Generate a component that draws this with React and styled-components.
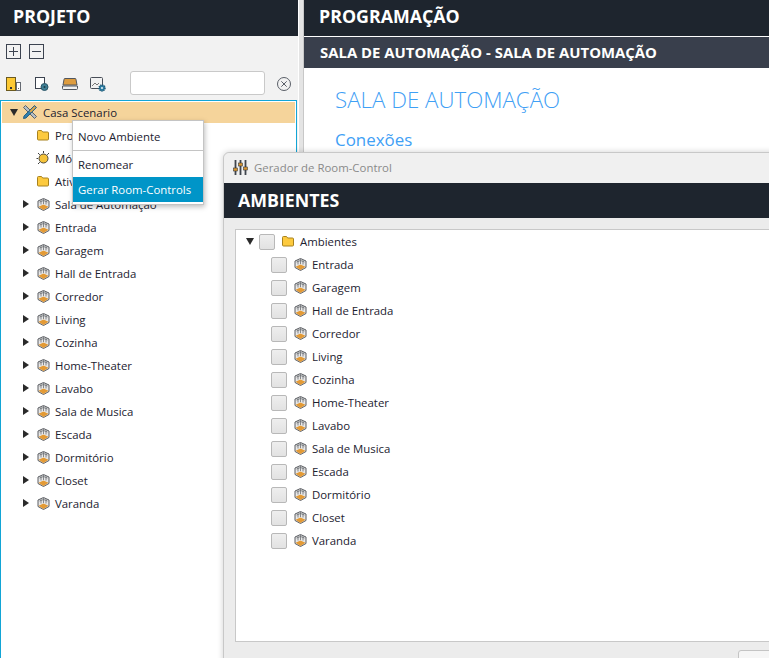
import React from 'react';
import styled, { createGlobalStyle } from 'styled-components';

const GlobalStyle = createGlobalStyle`
  html, body {
    margin: 0;
    padding: 0;
    background: #f2f2f2;
  }
  * {
    box-sizing: border-box;
  }
`;

const Page = styled.div`
  position: relative;
  display: grid;
  grid-template-columns: 298px 6px 1fr;
  width: 769px;
  height: 658px;
  overflow: hidden;
  font-family: 'Open Sans', 'Noto Sans', sans-serif;
  color: #1c2230;
`;

const Column = styled.div`
  display: flex;
  flex-direction: column;
  min-width: 0;
  background: ${(p) => p.$bg || '#f2f2f2'};
`;

const Divider = styled.div`
  background: #e4e4e4;
  border-left: 1px solid #fff;
  border-right: 1px solid #c8c8c8;
`;

const PanelHeader = styled.div`
  display: flex;
  align-items: center;
  height: ${(p) => p.$height || 36}px;
  flex: none;
  padding-left: ${(p) => p.$pad || 13}px;
  padding-bottom: ${(p) => p.$lift ?? 5}px;
  background: #1e252e;
  color: #fff;
  font-size: 17.8px;
  font-weight: 700;
`;

const SubHeader = styled.div`
  display: flex;
  align-items: center;
  height: 31px;
  margin-top: 1px;
  padding: 0 0 2px 16px;
  flex: none;
  background: #393f4c;
  color: #fff;
  font-size: 14.9px;
  font-weight: 700;
`;

const Content = styled.div`
  flex: 1;
  padding: 17px 31px;
  background: #fff;
  color: #3fa0f5;
`;

const Title = styled.div`
  font-size: 22.3px;
  line-height: 30px;
  font-weight: 300;
`;

const SectionLink = styled.div`
  margin-top: 13px;
  font-size: 16.9px;
  line-height: 24px;
`;

const ExpandRow = styled.div`
  display: flex;
  gap: 8px;
  height: 34px;
  padding: 8px 0 0 6px;
  flex: none;
`;

const SquareButton = styled.div`
  display: flex;
  align-items: center;
  justify-content: center;
  width: 15px;
  height: 15px;
  border: 1px solid #3c4350;
  color: #3c4350;
`;

const ToolRow = styled.div`
  display: flex;
  align-items: center;
  height: 30px;
  flex: none;
  padding: 0 0 2px 6px;
`;

const ToolSlot = styled.div`
  display: flex;
  width: 28px;
  flex: none;
`;

const SearchInput = styled.div`
  width: 135px;
  height: 24px;
  align-self: flex-start;
  margin: 1px 0 0 12px;
  border: 1px solid #c9c9c9;
  border-radius: 3px;
  background: #fff;
`;

const ClearButton = styled.div`
  display: flex;
  margin-left: 11px;
`;

const TreePanel = styled.div`
  flex: 1;
  margin-right: 1px;
  border: 1px solid #12a5d6;
  border-bottom: 0;
  padding: 1px;
  background: #fff;
`;

const Row = styled.div`
  display: flex;
  align-items: center;
  height: ${(p) => (p.$selected ? 21 : 23)}px;
  margin-bottom: ${(p) => (p.$selected ? 1 : 0)}px;
  padding-left: ${(p) => p.$indent}px;
  padding-bottom: 1px;
  background: ${(p) => (p.$selected ? '#f5d49b' : 'transparent')};
  font-size: 11.4px;
  white-space: nowrap;
`;

const Arrow = styled.span`
  width: 0;
  height: 0;
  flex: none;
  ${(p) =>
    p.$open
      ? `border-left: 4.5px solid transparent;
         border-right: 4.5px solid transparent;
         border-top: 7px solid #2a2a2a;
         margin-right: ${p.$gap}px;`
      : `border-top: 4.5px solid transparent;
         border-bottom: 4.5px solid transparent;
         border-left: 6px solid #2a2a2a;
         margin-right: ${p.$gap}px;`}
`;

const IconSlot = styled.span`
  display: flex;
  flex: none;
  margin-right: ${(p) => p.$gap}px;
`;

const Menu = styled.div`
  position: absolute;
  z-index: 3;
  left: 72px;
  top: 120px;
  width: 132px;
  padding: 1px 0 2px;
  border: 1px solid #c4c4c4;
  background: #fff;
  box-shadow: 1px 2px 5px rgba(0, 0, 0, 0.25);
  font-size: 11.4px;
`;

const MenuItem = styled.div`
  display: flex;
  align-items: center;
  height: ${(p) => p.$height}px;
  padding-left: 5px;
  background: ${(p) => (p.$active ? '#0095c8' : 'transparent')};
  color: ${(p) => (p.$active ? '#fff' : '#1c2230')};
  white-space: nowrap;
`;

const MenuRule = styled.div`
  height: 1px;
  background: #c4c4c4;
`;

const Dialog = styled.div`
  position: absolute;
  z-index: 2;
  left: 223px;
  top: 152px;
  width: 570px;
  height: 520px;
  display: flex;
  flex-direction: column;
  border: 1px solid #c8c8c8;
  border-radius: 6px 0 0 0;
  background: #ececec;
  box-shadow: 0 0 6px rgba(0, 0, 0, 0.18);
`;

const DialogTitle = styled.div`
  display: flex;
  align-items: center;
  gap: 6px;
  height: 30px;
  flex: none;
  padding: 0 0 1px 9px;
  border-radius: 6px 0 0 0;
  background: #f0f0f0;
  color: #8a8a8a;
  font-size: 11.4px;
`;

const DialogBody = styled.div`
  height: 413px;
  flex: none;
  margin: 11px 0 0 11px;
  border: 1px solid #c8c8c8;
  background: #fff;
`;

const DialogFooter = styled.div`
  height: 40px;
  flex: none;
  padding: 8px 0 0 514px;
`;

const FooterButton = styled.div`
  width: 60px;
  height: 30px;
  border: 1px solid #c4c4c4;
  border-radius: 3px;
  background: #f6f6f6;
`;

const Check = styled.span`
  width: 16px;
  height: 16px;
  flex: none;
  margin: 2px 7px 0 0;
  border: 1px solid #b8b8b8;
  border-radius: 2px;
  background: linear-gradient(#eeeeee, #e2e2e2);
`;

const FolderIcon = () => (
  <svg width="12" height="11" viewBox="0 0 12 11">
    <path d="M.5 1.500Q.5.5 1.500.5h3l1.200 1.500h4.800q1 0 1 1v6q0 1-1 1h-9q-1 0-1-1z" fill="#fdca3e" stroke="#a8821f" />
  </svg>
);

const RoomIcon = () => (
  <svg width="13" height="13" viewBox="0 0 13 13">
    <path d="M6.500.5L12 3v6.500l-5.500 3-5.500-3V3z" fill="#e8e8e8" stroke="#5a5d62" />
    <path d="M4 2.200v4.300M9 2.200v4.300M6.500 1v5M2.500 4L6.500 2.500 10.500 4" stroke="#6a6d72" strokeWidth=".8" fill="none" />
    <path d="M1.500 8.800l5-2.300 5 2.300-5 3.300z" fill="#e39a35" />
  </svg>
);

const ToolsIcon = () => (
  <svg width="14" height="14" viewBox="0 0 14 14">
    <path d="M2.500.5l11 11-2 2-11-11z" fill="#b4bec6" stroke="#3c4a58" strokeWidth=".8" />
    <path d="M11.500.5l2 2L3 13l-2.500.5L1 11z" fill="#2f7fae" stroke="#2a5f82" />
    <path d="M11.500 1.200l1.300 1.300-5 5-1.300-1.300z" fill="#e8a93f" />
  </svg>
);

const ModuleIcon = () => (
  <svg width="14" height="14" viewBox="0 0 14 14">
    <circle cx="7.500" cy="7.500" r="4.500" fill="#f5c33a" stroke="#4f4a3c" />
    <path d="M7.500 0v2M.5 7.500h1.500M2 2l1.800 1.800M13 2l-1.800 1.800M2 13l1.800-1.800" stroke="#3c3c3c" fill="none" />
  </svg>
);

const NewProjectIcon = () => (
  <svg width="16" height="14" viewBox="0 0 16 14">
    <rect x="0.500" y="0.500" width="9" height="13" fill="#fdc933" stroke="#6b5a20" />
    <rect x="10.500" y="5.500" width="4" height="8" fill="#fff" stroke="#666b73" />
    <rect x="4" y="10" width="2" height="2" fill="#333" />
    <rect x="12" y="11" width="1" height="1" fill="#666" />
  </svg>
);

const DeviceIcon = () => (
  <svg width="15" height="14" viewBox="0 0 15 14">
    <rect x="1.500" y="0.500" width="9" height="11" fill="#fff" stroke="#3c4350" />
    <circle cx="10.500" cy="10" r="3.500" fill="#3f7f95" stroke="#2a5566" />
    <circle cx="10.500" cy="10" r="1" fill="#1d3a45" />
  </svg>
);

const TrayIcon = () => (
  <svg width="16" height="12" viewBox="0 0 16 12">
    <path d="M2 1.500Q2 .5 3 .5h10q1 0 1 1L15 7H1z" fill="#dd9c3f" stroke="#50565f" />
    <path d="M.5 8h15v2.500q0 1-1 1h-13q-1 0-1-1z" fill="#f1f1f1" stroke="#50565f" />
  </svg>
);

const ImageGearIcon = () => (
  <svg width="16" height="15" viewBox="0 0 16 15">
    <rect x="0.500" y="0.500" width="12" height="11" rx="1" fill="#f1f1f1" stroke="#484e58" />
    <path d="M2 9l3-3 2 2 2-2" fill="none" stroke="#777" />
    <circle cx="12" cy="11" r="3" fill="#2c7da3" stroke="#1e5b78" strokeWidth="1.500" strokeDasharray="1.200 .8" />
    <circle cx="12" cy="11" r=".9" fill="#fff" />
  </svg>
);

const ClearIcon = () => (
  <svg width="16" height="16" viewBox="0 0 16 16">
    <circle cx="8" cy="8" r="6.500" fill="none" stroke="#5a5f68" />
    <path d="M5.300 5.300l5.400 5.400M10.700 5.300l-5.400 5.400" stroke="#5a5f68" fill="none" />
  </svg>
);

const SlidersIcon = () => (
  <svg width="15" height="15" viewBox="0 0 15 15">
    <path d="M2.500 0v15M7.500 0v15M12.500 0v15" stroke="#3f444c" strokeWidth="1.800" fill="none" />
    <rect x="0.500" y="8" width="4" height="3" fill="#d9952e" stroke="#3a3a3a" strokeWidth=".6" />
    <rect x="5.500" y="3" width="4" height="3" fill="#d9952e" stroke="#3a3a3a" strokeWidth=".6" />
    <rect x="10.500" y="7" width="4" height="3" fill="#d9952e" stroke="#3a3a3a" strokeWidth=".6" />
  </svg>
);

const PlusMinus = ({ plus }) => (
  <svg width="9" height="9" viewBox="0 0 9 9">
    <path d={plus ? 'M0 4.500h9M4.500 0v9' : 'M0 4.500h9'} stroke="currentColor" fill="none" />
  </svg>
);

const rooms = [
  'Sala de Automação',
  'Entrada',
  'Garagem',
  'Hall de Entrada',
  'Corredor',
  'Living',
  'Cozinha',
  'Home-Theater',
  'Lavabo',
  'Sala de Musica',
  'Escada',
  'Dormitório',
  'Closet',
  'Varanda',
];

const App = function App() {
  return (
    <>
      <GlobalStyle />
      <Page>
        <Column>
          <PanelHeader>PROJETO</PanelHeader>
          <ExpandRow>
            <SquareButton>
              <PlusMinus plus />
            </SquareButton>
            <SquareButton>
              <PlusMinus />
            </SquareButton>
          </ExpandRow>
          <ToolRow>
            <ToolSlot>
              <NewProjectIcon />
            </ToolSlot>
            <ToolSlot>
              <DeviceIcon />
            </ToolSlot>
            <ToolSlot>
              <TrayIcon />
            </ToolSlot>
            <ToolSlot>
              <ImageGearIcon />
            </ToolSlot>
            <SearchInput />
            <ClearButton>
              <ClearIcon />
            </ClearButton>
          </ToolRow>
          <TreePanel>
            <Row $indent={8} $selected>
              <Arrow $open $gap={5} />
              <IconSlot $gap={6}>
                <ToolsIcon />
              </IconSlot>
              Casa Scenario
            </Row>
            <Row $indent={35}>
              <IconSlot $gap={6}>
                <FolderIcon />
              </IconSlot>
              Projeto
            </Row>
            <Row $indent={34}>
              <IconSlot $gap={5}>
                <ModuleIcon />
              </IconSlot>
              Módulos
            </Row>
            <Row $indent={35}>
              <IconSlot $gap={6}>
                <FolderIcon />
              </IconSlot>
              Ativos
            </Row>
            {rooms.map((room) => (
              <Row $indent={21} key={room}>
                <Arrow $gap={8} />
                <IconSlot $gap={5}>
                  <RoomIcon />
                </IconSlot>
                {room}
              </Row>
            ))}
          </TreePanel>
        </Column>
        <Divider />
        <Column $bg="#fff">
          <PanelHeader $pad={15}>PROGRAMAÇÃO</PanelHeader>
          <SubHeader>SALA DE AUTOMAÇÃO - SALA DE AUTOMAÇÃO</SubHeader>
          <Content>
            <Title>SALA DE AUTOMAÇÃO</Title>
            <SectionLink>Conexões</SectionLink>
          </Content>
        </Column>

        <Menu>
          <MenuItem $height={28}>Novo Ambiente</MenuItem>
          <MenuRule />
          <MenuItem $height={26}>Renomear</MenuItem>
          <MenuItem $height={25} $active>
            Gerar Room-Controls
          </MenuItem>
        </Menu>

        <Dialog>
          <DialogTitle>
            <SlidersIcon />
            Gerador de Room-Control
          </DialogTitle>
          <PanelHeader $pad={14} $height={35} $lift={2}>
            AMBIENTES
          </PanelHeader>
          <DialogBody>
            <Row $indent={10}>
              <Arrow $open $gap={5} />
              <Check />
              <IconSlot $gap={6}>
                <FolderIcon />
              </IconSlot>
              Ambientes
            </Row>
            {rooms.slice(1).map((room) => (
              <Row $indent={35} key={room}>
                <Check />
                <IconSlot $gap={5}>
                  <RoomIcon />
                </IconSlot>
                {room}
              </Row>
            ))}
          </DialogBody>
          <DialogFooter>
            <FooterButton />
          </DialogFooter>
        </Dialog>
      </Page>
    </>
  );
};

export default App;
